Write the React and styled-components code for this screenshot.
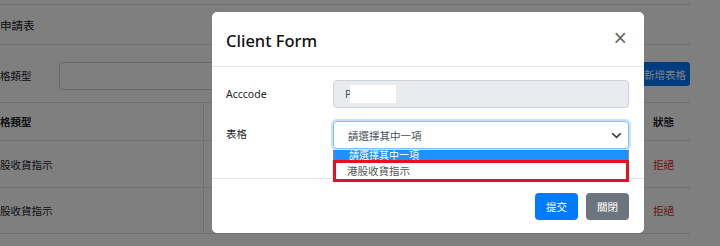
import React from 'react';
import styled, { createGlobalStyle } from 'styled-components';

const GlobalStyle = createGlobalStyle`
  html, body {
    margin: 0;
    padding: 0;
    overflow: hidden;
    background: #fff;
  }
  body {
    font-family: "Noto Sans", "Noto Sans CJK TC", sans-serif;
    color: #212529;
  }
`;

const Page = styled.div`
  position: relative;
  width: 720px;
  height: 246px;
  overflow: hidden;
  background: #fff;
  font-size: 10.5px;
`;

const PageInner = styled.div`
  width: 720px;
  padding-right: 30px;
  box-sizing: border-box;
`;

const TopRule = styled.div`
  height: 4px;
  border-bottom: 1px solid #dee2e6;
`;

const CardHeader = styled.div`
  height: 39px;
  display: flex;
  align-items: center;
  font-size: 11.5px;
  border-bottom: 1px solid #dee2e6;
`;

const FilterRow = styled.div`
  height: 57px;
  display: flex;
  align-items: center;
  padding-top: 4px;
  box-sizing: border-box;
`;

const FilterLabel = styled.div`
  width: 59px;
  flex: none;
`;

const FilterInput = styled.div`
  flex: 1;
  height: 28px;
  border: 1px solid #ced4da;
  border-radius: 4px;
  box-sizing: border-box;
  margin-right: 12px;
`;

const AddButton = styled.div`
  height: 24px;
  padding: 0 4px;
  display: flex;
  align-items: center;
  background: #007bff;
  color: #fff;
  border-radius: 3px;
  margin-top: -3px;
`;

const Table = styled.div`
  border-top: 1px solid #dee2e6;
`;

const Row = styled.div`
  display: grid;
  grid-template-columns: 204px 1fr 45px;
  height: ${(p) => p.h}px;
  border-bottom: 1px solid #dee2e6;
  font-weight: ${(p) => (p.head ? 700 : 400)};
`;

const Cell = styled.div`
  display: flex;
  align-items: center;
  padding-left: ${(p) => p.pad || 0}px;
  border-right: ${(p) => (p.divider ? '1px solid #dee2e6' : 'none')};
  color: ${(p) => (p.danger ? '#d42a2a' : 'inherit')};
`;

const Backdrop = styled.div`
  position: absolute;
  inset: 0;
  background: rgba(0, 0, 0, 0.5);
`;

const Modal = styled.div`
  position: absolute;
  left: 212px;
  top: 12px;
  width: 432px;
  background: #fff;
  border-radius: 5px;
  display: flex;
  flex-direction: column;
`;

const ModalHeader = styled.div`
  height: 54px;
  display: flex;
  align-items: center;
  justify-content: space-between;
  padding: 0 15px 0 14px;
  border-bottom: 1px solid #e5e5e5;
`;

const Title = styled.div`
  font-size: 16.5px;
  font-weight: 500;
  color: #111;
  margin-top: 2px;
`;

const Close = styled.div`
  font-family: "Liberation Sans", sans-serif;
  font-size: 23px;
  font-weight: 400;
  color: #000;
  opacity: 0.6;
  line-height: 1;
  margin-right: 2px;
  margin-top: -2px;
`;

const ModalBody = styled.div`
  height: 111px;
  box-sizing: border-box;
  padding: 13px 15px 0 14px;
  display: flex;
  flex-direction: column;
  gap: 13px;
`;

const FormRow = styled.div`
  display: grid;
  grid-template-columns: 107px 1fr;
  align-items: center;
`;

const Label = styled.div`
  color: #212529;
  margin-top: ${(p) => p.offset || 0}px;
`;

const ReadOnlyInput = styled.div`
  height: 28px;
  box-sizing: border-box;
  display: flex;
  align-items: center;
  padding-left: 11px;
  background: #e9ecef;
  border: 1px solid #ced4da;
  border-radius: 4px;
  color: #495057;
`;

const Redacted = styled.span`
  display: inline-block;
  width: 46px;
  height: 18px;
  background: #fff;
  margin-left: -1px;
`;

const SelectWrap = styled.div`
  position: relative;
`;

const Select = styled.div`
  height: 28px;
  box-sizing: border-box;
  display: flex;
  align-items: center;
  justify-content: space-between;
  padding: 0 6px 0 14px;
  border: 1px solid #80bdff;
  border-radius: 4px;
  box-shadow: 0 0 0 2px rgba(0, 123, 255, 0.22);
  color: #495057;
`;

const Dropdown = styled.div`
  position: absolute;
  left: 0;
  right: 0;
  top: 29px;
  background: #fff;
  border-left: 1px solid #8a8a8a;
  border-right: 1px solid #8a8a8a;
  z-index: 2;
`;

const Option = styled.div`
  box-sizing: border-box;
  height: ${(p) => (p.active ? 10 : 22)}px;
  display: flex;
  align-items: center;
  padding-left: ${(p) => (p.active ? 15 : 11)}px;
  background: ${(p) => (p.active ? '#1e90ff' : '#fff')};
  color: ${(p) => (p.active ? '#fff' : '#555')};
  font-size: ${(p) => (p.active ? 10 : 10.5)}px;
  line-height: ${(p) => (p.active ? '10px' : '14px')};
  border: ${(p) => (p.marked ? '3px solid #e8101c' : 'none')};
  margin: ${(p) => (p.marked ? '0 -1px' : '0')};
`;

const ModalFooter = styled.div`
  height: 54px;
  box-sizing: content-box;
  border-top: 1px solid #e5e5e5;
  display: flex;
  align-items: center;
  justify-content: flex-end;
  gap: 8px;
  padding: 0 15px 0 14px;
`;

const Button = styled.div`
  height: 27px;
  padding: 0 11px;
  display: flex;
  align-items: center;
  border-radius: 4px;
  color: #fff;
  background: ${(p) => (p.variant === 'secondary' ? '#6c757d' : '#007bff')};
`;

const Chevron = () => (
  <svg width="11" height="7" viewBox="0 0 11 7">
    <path d="M1.2 1.2 5.5 5.4 9.8 1.2" fill="none" stroke="#343a40" strokeWidth="1.6" />
  </svg>
);

export default function App() {
  return (
    <>
      <GlobalStyle />
      <Page>
        <PageInner>
          <TopRule />
          <CardHeader>申請表</CardHeader>
          <FilterRow>
            <FilterLabel>格類型</FilterLabel>
            <FilterInput />
            <AddButton>新增表格</AddButton>
          </FilterRow>
          <Table>
            <Row h={37} head>
              <Cell divider>格類型</Cell>
              <Cell />
              <Cell pad={8}>狀態</Cell>
            </Row>
            <Row h={46}>
              <Cell divider>股收貨指示</Cell>
              <Cell />
              <Cell pad={8} danger>拒絕</Cell>
            </Row>
            <Row h={45}>
              <Cell divider>股收貨指示</Cell>
              <Cell />
              <Cell pad={8} danger>拒絕</Cell>
            </Row>
          </Table>
        </PageInner>
        <Backdrop />
        <Modal>
          <ModalHeader>
            <Title>Client Form</Title>
            <Close>×</Close>
          </ModalHeader>
          <ModalBody>
            <FormRow>
              <Label>Acccode</Label>
              <ReadOnlyInput>
                P<Redacted />
              </ReadOnlyInput>
            </FormRow>
            <FormRow>
              <Label offset={-4}>表格</Label>
              <SelectWrap>
                <Select>
                  <span>請選擇其中一項</span>
                  <Chevron />
                </Select>
                <Dropdown>
                  <Option active>請選擇其中一項</Option>
                  <Option marked>港股收貨指示</Option>
                </Dropdown>
              </SelectWrap>
            </FormRow>
          </ModalBody>
          <ModalFooter>
            <Button>提交</Button>
            <Button variant="secondary">關閉</Button>
          </ModalFooter>
        </Modal>
      </Page>
    </>
  );
}
